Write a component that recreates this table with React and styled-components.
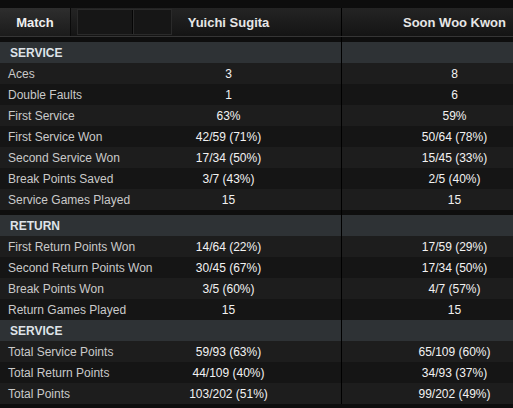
import React from 'react'
import styled, { createGlobalStyle } from 'styled-components'

const Global = createGlobalStyle`
  html, body {
    margin: 0;
    background: #0d0d0d;
    overflow: hidden;
  }
`

const Frame = styled.div`
  width: 513px;
  overflow: hidden;
`

const Board = styled.div`
  width: 567px;
  padding-top: 8px;
  font-family: "Liberation Sans", Arial, sans-serif;
`

const HeaderRow = styled.div`
  display: grid;
  grid-template-columns: 116px 225px 226px;
  height: 28px;
  background: linear-gradient(#242424, #141414);
  border-bottom: 1px solid #353535;
`

const HeadLeft = styled.div`
  display: flex;
  align-items: stretch;
`

const MatchTab = styled.div`
  flex: none;
  width: 71px;
  display: flex;
  align-items: center;
  justify-content: center;
  color: #f0f0f0;
  font-weight: bold;
  font-size: 13px;
  background: linear-gradient(#2e2e2e, #1b1b1b);
  border-right: 1px solid #0a0a0a;
  box-sizing: border-box;
`

const Picker = styled.div`
  flex: none;
  width: 95px;
  margin: 1px 0 1px 6px;
  display: flex;
  background: #161616;
  border: 1px solid #2a2a2a;
  box-sizing: border-box;
`

const PickerSlot = styled.div`
  width: ${p => p.$w}px;
  border-right: ${p => (p.$last ? 'none' : '1px solid #050505')};
  box-shadow: ${p => (p.$last ? 'none' : '1px 0 0 #2a2a2a')};
`

const PlayerName = styled.div`
  display: flex;
  align-items: center;
  justify-content: center;
  color: #e6e6e6;
  font-weight: bold;
  font-size: 13px;
  border-left: ${p => (p.$divided ? '1px solid #000' : 'none')};
`

const Gap = styled.div`
  display: grid;
  grid-template-columns: 341px 1fr;
  height: 5px;
  background: #0e0e0e;
`

const GapCell = styled.div`
  border-left: ${p => (p.$divided ? '1px solid #000' : 'none')};
`

const Row = styled.div`
  display: grid;
  grid-template-columns: 116px 225px 226px;
  height: 21px;
  align-items: stretch;
  font-size: 12px;
  background: ${p => (p.$head ? '#2e3235' : p.$odd ? '#1d1d1d' : '#151515')};
`

const Label = styled.div`
  display: flex;
  align-items: center;
  padding-left: ${p => (p.$head ? 10 : 8)}px;
  white-space: nowrap;
  color: ${p => (p.$head ? '#dfe3e8' : '#cacaca')};
  font-weight: ${p => (p.$head ? 'bold' : 'normal')};
`

const Value = styled.div`
  display: flex;
  align-items: center;
  justify-content: center;
  color: #f2f2f2;
  border-left: ${p => (p.$divided ? '1px solid #000' : 'none')};
`

const sections = [
  {
    title: 'SERVICE',
    rows: [
      ['Aces', '3', '8'],
      ['Double Faults', '1', '6'],
      ['First Service', '63%', '59%'],
      ['First Service Won', '42/59 (71%)', '50/64 (78%)'],
      ['Second Service Won', '17/34 (50%)', '15/45 (33%)'],
      ['Break Points Saved', '3/7 (43%)', '2/5 (40%)'],
      ['Service Games Played', '15', '15'],
    ],
    gapAfter: true,
  },
  {
    title: 'RETURN',
    rows: [
      ['First Return Points Won', '14/64 (22%)', '17/59 (29%)'],
      ['Second Return Points Won', '30/45 (67%)', '17/34 (50%)'],
      ['Break Points Won', '3/5 (60%)', '4/7 (57%)'],
      ['Return Games Played', '15', '15'],
    ],
  },
  {
    title: 'SERVICE',
    rows: [
      ['Total Service Points', '59/93 (63%)', '65/109 (60%)'],
      ['Total Return Points', '44/109 (40%)', '34/93 (37%)'],
      ['Total Points', '103/202 (51%)', '99/202 (49%)'],
    ],
  },
]

const Section = ({ title, rows }) => (
  <>
    <Row $head>
      <Label $head>{title}</Label>
      <Value />
      <Value $divided />
    </Row>
    {rows.map(([label, a, b], i) => (
      <Row key={label} $odd={i % 2 === 0}>
        <Label>{label}</Label>
        <Value>{a}</Value>
        <Value $divided>{b}</Value>
      </Row>
    ))}
  </>
)

const App = () => (
  <>
    <Global />
    <Frame>
      <Board>
        <HeaderRow>
          <HeadLeft>
            <MatchTab>Match</MatchTab>
            <Picker>
              <PickerSlot $w={55} />
              <PickerSlot $w={38} $last />
            </Picker>
          </HeadLeft>
          <PlayerName>Yuichi Sugita</PlayerName>
          <PlayerName $divided>Soon Woo Kwon</PlayerName>
        </HeaderRow>
        <Gap>
          <GapCell />
          <GapCell $divided />
        </Gap>
        {sections.map((s, i) => (
          <React.Fragment key={i}>
            <Section title={s.title} rows={s.rows} />
            {s.gapAfter && (
              <Gap>
                <GapCell />
                <GapCell $divided />
              </Gap>
            )}
          </React.Fragment>
        ))}
      </Board>
    </Frame>
  </>
)

export default App
